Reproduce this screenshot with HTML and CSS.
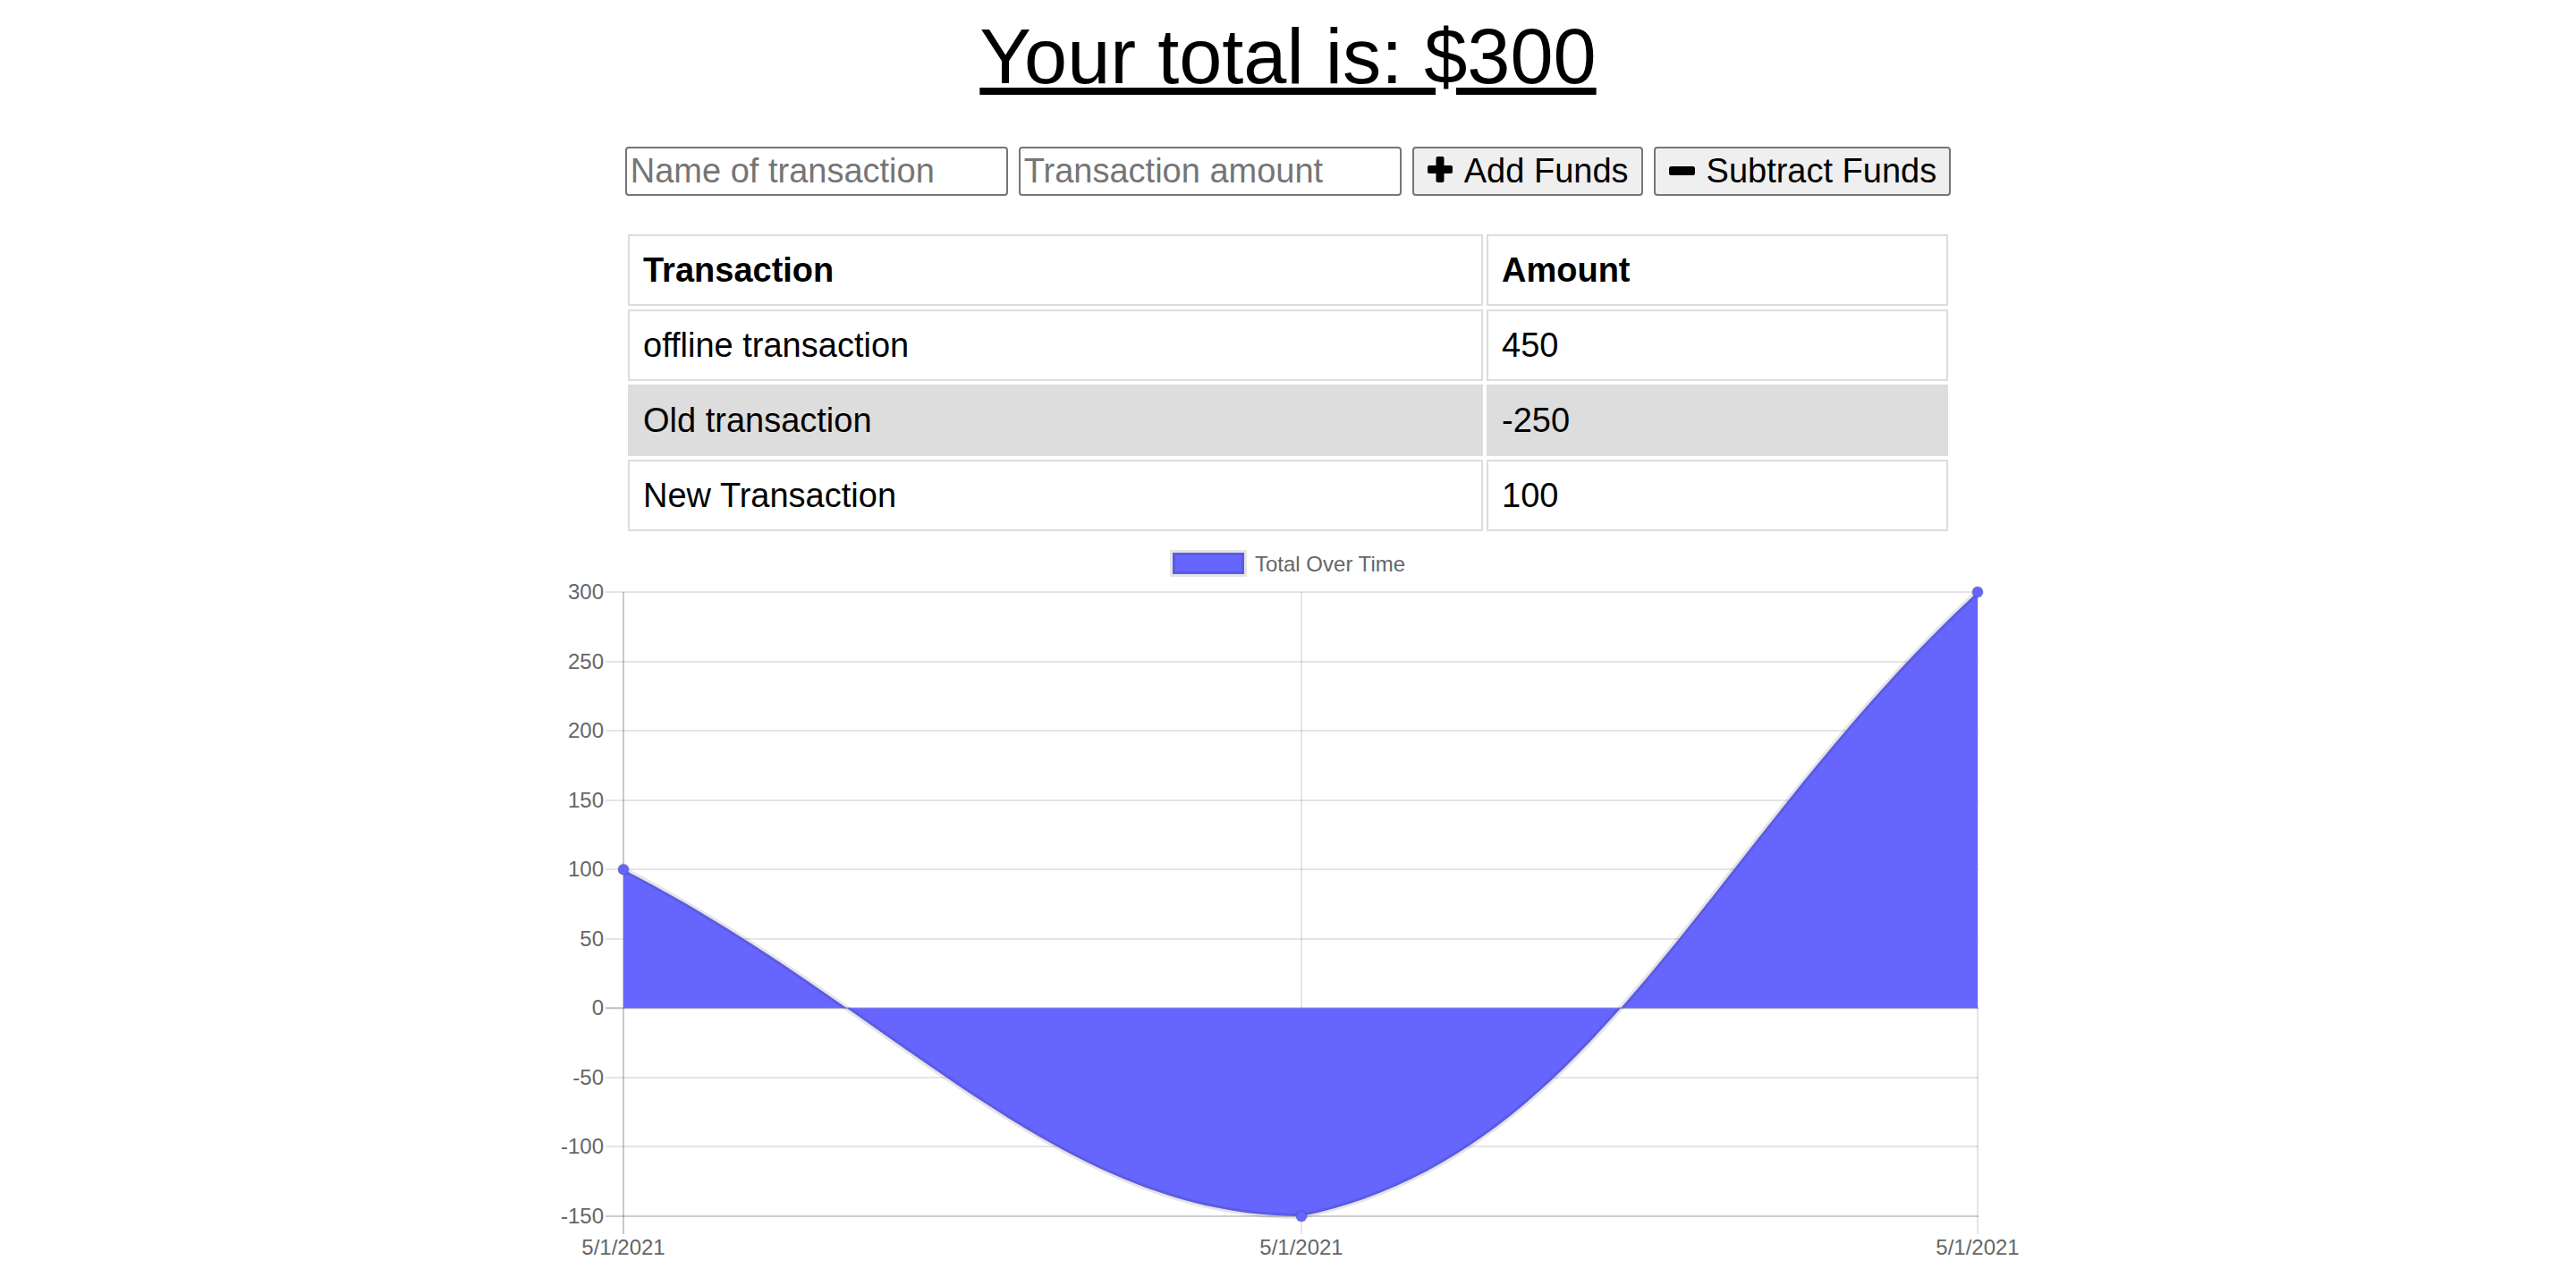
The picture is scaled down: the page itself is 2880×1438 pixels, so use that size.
FILE: index.html
```html
<!DOCTYPE html>
<html lang="en">
<head>
<meta charset="utf-8">
<title>Budget Tracker</title>
<link rel="stylesheet" href="styles.css">
</head>
<body>
<h1 class="total">Your total is: $300</h1>

<div class="form">
  <input class="field" type="text" placeholder="Name of transaction">
  <input class="field" type="text" placeholder="Transaction amount">
  <button class="btn" type="button"><svg class="icon" viewBox="0 0 28 29" aria-hidden="true"><rect x="9.5" y="0" width="9" height="29" rx="2"/><rect x="0" y="10" width="28" height="9" rx="2"/></svg>Add Funds</button>
  <button class="btn" type="button"><svg class="icon icon-minus" viewBox="0 0 29 10" aria-hidden="true"><rect x="0" y="0" width="29" height="10" rx="2.5"/></svg>Subtract Funds</button>
</div>

<table class="table">
  <thead>
    <tr><th class="col-name">Transaction</th><th class="col-amount">Amount</th></tr>
  </thead>
  <tbody>
    <tr><td>offline transaction</td><td>450</td></tr>
    <tr class="row-alt"><td>Old transaction</td><td>-250</td></tr>
    <tr><td>New Transaction</td><td>100</td></tr>
  </tbody>
</table>

<svg class="chart" width="1640" height="840" viewBox="620 598 1640 840" aria-label="Total Over Time chart">
  <!-- legend -->
  <rect x="1311" y="618" width="80" height="24" fill="#6666ff" stroke="rgba(0,0,0,0.1)" stroke-width="6"/>
  <text class="lbl" x="1403" y="638.5">Total Over Time</text>

  <!-- gridlines -->
  <g stroke="rgba(0,0,0,0.1)" stroke-width="2">
    <line x1="677" y1="662" x2="2212" y2="662"/>
    <line x1="677" y1="740" x2="2212" y2="740"/>
    <line x1="677" y1="817" x2="2212" y2="817"/>
    <line x1="677" y1="895" x2="2212" y2="895"/>
    <line x1="677" y1="972" x2="2212" y2="972"/>
    <line x1="677" y1="1050" x2="2212" y2="1050"/>
    <line x1="677" y1="1205" x2="2212" y2="1205"/>
    <line x1="677" y1="1282" x2="2212" y2="1282"/>
    <line x1="677" y1="1360" x2="2212" y2="1360"/>
    <line x1="677" y1="1360" x2="2212" y2="1360"/>
    <line x1="1455" y1="662" x2="1455" y2="1380"/>
    <line x1="2211" y1="662" x2="2211" y2="1380"/>
    <line x1="697" y1="662" x2="697" y2="1380"/>
  </g>
  <line x1="677" y1="1127.3" x2="2212" y2="1127.3" stroke="rgba(0,0,0,0.25)" stroke-width="2"/>
  <line x1="697" y1="662" x2="697" y2="1380" stroke="rgba(0,0,0,0.12)" stroke-width="2"/>

  <!-- y labels -->
  <g class="lbl" text-anchor="end">
    <text x="675" y="670">300</text>
    <text x="675" y="748">250</text>
    <text x="675" y="825">200</text>
    <text x="675" y="903">150</text>
    <text x="675" y="980">100</text>
    <text x="675" y="1058">50</text>
    <text x="675" y="1135">0</text>
    <text x="675" y="1213">-50</text>
    <text x="675" y="1290">-100</text>
    <text x="675" y="1368">-150</text>
  </g>

  <!-- x labels -->
  <g class="lbl" text-anchor="middle">
    <text x="697" y="1403">5/1/2021</text>
    <text x="1455" y="1403">5/1/2021</text>
    <text x="2211" y="1403">5/1/2021</text>
  </g>

  <!-- dataset -->
  <path d="M697,972.2 C1000.2,1127.3 1180.8,1360 1455,1360 C1786.4,1292.1 1908.6,941.2 2211,662 L2211,1127.3 L697,1127.3 Z" fill="#6666ff"/>
  <path d="M697,972.2 C1000.2,1127.3 1180.8,1360 1455,1360 C1786.4,1292.1 1908.6,941.2 2211,662" fill="none" stroke="rgba(0,0,0,0.1)" stroke-width="6"/>
  <g fill="#6666ff" stroke="rgba(0,0,0,0.1)" stroke-width="2">
    <circle cx="697" cy="972.2" r="6"/>
    <circle cx="1455" cy="1360" r="6"/>
    <circle cx="2211" cy="662" r="6"/>
  </g>
</svg>
</body>
</html>
```

FILE: styles.css
```css
html, body {
  margin: 0;
  padding: 0;
  background: #ffffff;
}

body {
  font-family: "Liberation Sans", Arial, Helvetica, sans-serif;
  color: #000000;
}

.total {
  margin: 14px 0 0;
  font-size: 86.5px;
  line-height: 99px;
  font-weight: normal;
  text-align: center;
  text-decoration: underline;
}

.form {
  display: flex;
  justify-content: center;
  gap: 12px;
  margin-top: 51px;
  height: 55px;
}

.field {
  box-sizing: border-box;
  width: 428px;
  height: 55px;
  margin: 0;
  padding: 0 4px;
  border: 2px solid #767676;
  border-radius: 4px;
  font-family: "Liberation Sans", Arial, sans-serif;
  font-size: 38px;
  color: #000000;
  background: #ffffff;
}

.field::placeholder {
  color: #757575;
}

.btn {
  box-sizing: border-box;
  display: inline-flex;
  align-items: center;
  height: 55px;
  margin: 0;
  padding: 0 14px 0 15px;
  border: 2px solid #767676;
  border-radius: 4px;
  background: #efefef;
  font-family: "Liberation Sans", Arial, sans-serif;
  font-size: 38px;
  color: #000000;
  white-space: nowrap;
}

.icon {
  width: 28px;
  height: 29px;
  margin-right: 13px;
  margin-top: -4px;
  fill: #000000;
  flex: none;
}

.icon-minus {
  width: 29px;
  height: 10px;
  margin-top: -1px;
}

.table {
  box-sizing: border-box;
  width: 1484px;
  margin: 39px auto 0;
  border-spacing: 4px;
  table-layout: fixed;
}

.table th,
.table td {
  box-sizing: border-box;
  border: 2px solid #dddddd;
  padding: 16px 15px;
  font-size: 38px;
  line-height: 44px;
  text-align: left;
}

.table th {
  font-weight: bold;
}

.col-name {
  width: 956px;
}

.col-amount {
  width: 516px;
}

.row-alt td {
  background: #dddddd;
}

.chart {
  display: block;
  margin: 0 auto;
}

.lbl {
  font-family: "Liberation Sans", Arial, Helvetica, sans-serif;
  font-size: 24px;
  fill: #666666;
}
```
